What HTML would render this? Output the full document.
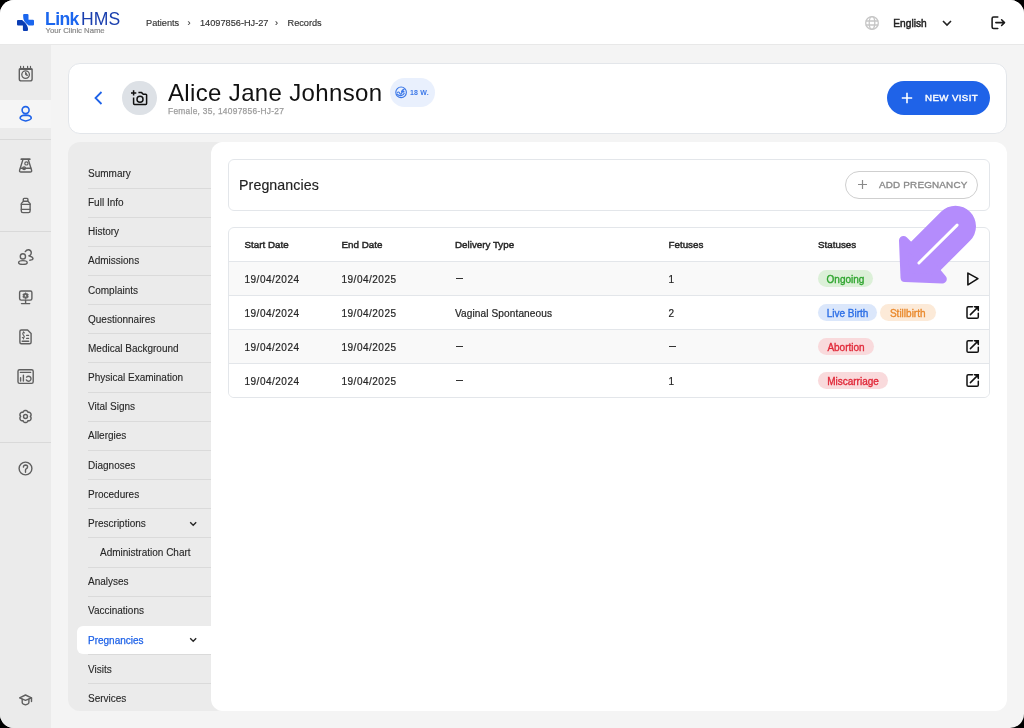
<!DOCTYPE html>
<html><head><meta charset="utf-8"><style>
*{margin:0;padding:0;box-sizing:border-box}
html,body{width:1024px;height:728px;overflow:hidden;background:#000}
body{font-family:"Liberation Sans",sans-serif;color:#222;position:relative}
.screen{position:absolute;left:0;top:0;width:1024px;height:728px;background:#f4f4f4;border-radius:14px;overflow:hidden;will-change:transform}
.abs{position:absolute}
.t{position:absolute;white-space:nowrap;line-height:1}
svg{position:absolute;overflow:visible}
.card{position:absolute;background:#fff;border:1px solid #e3e6ea;border-radius:12px}
.ni{position:absolute;font-size:10px;line-height:1;color:#262626;white-space:nowrap;-webkit-text-stroke:0.1px #262626}
.dv{position:absolute;height:1px;background:#dadada}
.cell{position:absolute;font-size:10px;letter-spacing:0.5px;-webkit-text-stroke:0.2px #262626;line-height:1;color:#262626;white-space:nowrap}
.hcell{position:absolute;font-size:9.8px;-webkit-text-stroke:0.45px currentColor;line-height:1;color:#262626;white-space:nowrap}
.chip{position:absolute;height:17px;border-radius:9px;font-size:10px;line-height:19px;white-space:nowrap;text-align:center;-webkit-text-stroke:0.35px currentColor}
.ic{fill:none;stroke:#5f5f5f;stroke-width:1.4;stroke-linecap:round;stroke-linejoin:round}
</style></head><body><div class="screen">
<div class="abs" style="left:0;top:0;width:1024px;height:45px;background:#fff;border-bottom:1px solid #e8e8e8"></div>
<svg style="left:17px;top:14px" width="17" height="17" viewBox="0 0 17 17">
<path d="M6.1 1.1 Q6.1 0 7.2 0 L10.4 0 Q11.5 0 11.5 1.1 L11.5 5.7 L15.9 5.7 Q17 5.7 17 6.8 L17 10.4 Q17 11.5 15.9 11.5 L11.7 11.5 C9.5 9.5 6.6 7.5 6.3 4 Z" fill="#1b66ee"/>
<path d="M0 6.8 Q0 5.9 1.1 5.9 L5.2 5.9 C7.6 8.2 10.9 11 11 14.6 L11 15.9 Q11 17 9.9 17 L7 17 Q5.9 17 5.9 15.9 L5.9 11.5 L1.1 11.5 Q0 11.5 0 10.4 Z" fill="#0a3db4"/>
</svg>
<div class="t" style="left:45px;top:11px;font-size:17.6px;font-weight:bold;color:#1b66ee;letter-spacing:-0.6px">Link</div>
<div class="t" style="left:81px;top:11px;font-size:17.6px;color:#1a3fae;letter-spacing:0.1px">HMS</div>
<div class="t" style="left:45.5px;top:26.5px;font-size:7.8px;color:#8a8a8a;letter-spacing:-0.05px;-webkit-text-stroke:0.2px #8a8a8a">Your Clinic Name</div>
<div class="t" style="left:146px;top:18.6px;font-size:9.2px;color:#333;-webkit-text-stroke:0.15px #333">Patients</div>
<div class="t" style="left:187.5px;top:18.6px;font-size:9.2px;color:#333;-webkit-text-stroke:0.15px #333">&rsaquo;</div>
<div class="t" style="left:200px;top:18.6px;font-size:9.2px;color:#333;-webkit-text-stroke:0.15px #333">14097856-HJ-27</div>
<div class="t" style="left:275px;top:18.6px;font-size:9.2px;color:#333;-webkit-text-stroke:0.15px #333">&rsaquo;</div>
<div class="t" style="left:287.5px;top:18.6px;font-size:9.2px;color:#333;-webkit-text-stroke:0.15px #333">Records</div>
<svg style="left:865px;top:16px" width="14" height="14" viewBox="0 0 14 14" fill="none" stroke="#c6c6c6" stroke-width="1.3">
<circle cx="7" cy="7" r="6.3"/><ellipse cx="7" cy="7" rx="2.8" ry="6.3"/><path d="M0.7 5H13.3M0.7 9H13.3"/></svg>
<div class="t" style="left:893.3px;top:18.6px;font-size:10.2px;color:#222;-webkit-text-stroke:0.45px #222">English</div>
<svg style="left:942px;top:20px" width="10" height="6" viewBox="0 0 10 6" fill="none" stroke="#222" stroke-width="1.6"><path d="M1 1L5 5L9 1"/></svg>
<svg style="left:991px;top:16px" width="15" height="13" viewBox="0 0 15 13" fill="none" stroke="#1a1a1a" stroke-width="1.55" stroke-linecap="round" stroke-linejoin="round">
<path d="M6.8 1H2.6Q1.1 1 1.1 2.5V10.9Q1.1 12.4 2.6 12.4H6.8M4.8 6.6H13.5M10.6 3.7L13.5 6.6L10.6 9.5"/></svg>
<div class="abs" style="left:0;top:45px;width:51px;height:683px;background:#ebebeb"></div>
<div class="abs" style="left:0;top:100px;width:51px;height:28px;background:#f5f5f5"></div>
<div class="abs" style="left:0;top:139px;width:51px;height:1px;background:#d9d9d9"></div>
<div class="abs" style="left:0;top:231px;width:51px;height:1px;background:#d9d9d9"></div>
<div class="abs" style="left:0;top:442px;width:51px;height:1px;background:#d9d9d9"></div>
<svg style="left:14px;top:60px" width="24" height="24" viewBox="0 0 24 24" class="ic" ><rect x="5.3" y="8.6" width="12.8" height="12.3" rx="2"/><path d="M5.6 9.2H17.8" stroke-width="1.8"/><path d="M6.6 6.4V8.6M9.5 6.4V8.6M13.6 6.4V8.6M16.5 6.4V8.6" stroke-width="1.2"/><circle cx="11.6" cy="14.6" r="3.8" stroke-width="1.3"/><path d="M11.6 12.6V14.8L13.2 15.4Z" fill="#5f5f5f" stroke-width="1"/></svg>
<svg style="left:14px;top:102px" width="24" height="24" viewBox="0 0 24 24" class="ic"><g style="stroke:#1f63e8;stroke-width:1.6"><circle cx="11.6" cy="8.1" r="3.5"/><path d="M6.1 16.1Q6.5 13.2 11.7 13.1Q16.9 13.2 17.3 16.1Q16.8 17.9 11.7 19Q6.6 17.9 6.1 16.1Z"/></g></svg>
<svg style="left:14px;top:154px" width="24" height="24" viewBox="0 0 24 24" class="ic" ><path d="M7.3 5.2H15.8" stroke-width="1.7"/><path d="M9 5.4L5.6 16.3Q5.2 18 7 18H16.2Q18 18 17.6 16.3L14.2 5.4"/><path d="M6.6 14.3H16.8"/><circle cx="12.4" cy="9.4" r="1.6" stroke-width="1.2"/><circle cx="10.1" cy="14.2" r="1.4" stroke-width="1.2"/></svg>
<svg style="left:14px;top:194px" width="24" height="24" viewBox="0 0 24 24" class="ic" ><rect x="9.3" y="4.4" width="4.6" height="2.8" rx="0.8"/><path d="M9.4 7.3L7.3 9.6V17Q7.3 18.6 8.9 18.6H14.5Q16.1 18.6 16.1 17V9.6L14 7.3"/><path d="M7.4 10.4H16M7.4 15.4H16"/></svg>
<svg style="left:14px;top:245px" width="24" height="24" viewBox="0 0 24 24" class="ic" ><circle cx="8.9" cy="11.4" r="2.6"/><ellipse cx="8.9" cy="17.5" rx="4.3" ry="1.9"/><path d="M11.3 6.6Q12.6 4.6 14.4 4.7Q17.4 5 17.3 8Q17.1 10.2 14.8 10.9Q18.9 11.8 19 13.5Q18.9 15 15.8 15.2"/></svg>
<svg style="left:14px;top:285px" width="24" height="24" viewBox="0 0 24 24" class="ic" ><rect x="5.6" y="6" width="12.3" height="9.1" rx="1.5"/><path d="M11.6 15.3V18.5M7.5 18.6H15.7"/><path d="M13.70 10.80 L14.00 10.59 L14.18 10.35 L14.29 10.08 L14.33 9.81 L14.30 9.54 L14.20 9.30 L14.04 9.09 L13.82 8.93 L13.57 8.83 L13.28 8.80 L12.98 8.83 L12.65 8.98 L12.62 8.62 L12.50 8.34 L12.32 8.11 L12.10 7.94 L11.86 7.84 L11.60 7.80 L11.34 7.84 L11.10 7.94 L10.88 8.11 L10.70 8.34 L10.58 8.62 L10.55 8.98 L10.22 8.83 L9.92 8.80 L9.63 8.83 L9.38 8.93 L9.16 9.09 L9.00 9.30 L8.90 9.54 L8.87 9.81 L8.91 10.08 L9.02 10.35 L9.20 10.59 L9.50 10.80 L9.20 11.01 L9.02 11.25 L8.91 11.52 L8.87 11.79 L8.90 12.06 L9.00 12.30 L9.16 12.51 L9.38 12.67 L9.63 12.77 L9.92 12.80 L10.22 12.77 L10.55 12.62 L10.58 12.98 L10.70 13.26 L10.88 13.49 L11.10 13.66 L11.34 13.76 L11.60 13.80 L11.86 13.76 L12.10 13.66 L12.32 13.49 L12.50 13.26 L12.62 12.98 L12.65 12.62 L12.98 12.77 L13.28 12.80 L13.57 12.77 L13.82 12.67 L14.04 12.51 L14.20 12.30 L14.30 12.06 L14.33 11.79 L14.29 11.52 L14.18 11.25 L14.00 11.01 L13.70 10.80Z M12.75 10.8A1.15 1.15 0 1 0 10.45 10.8A1.15 1.15 0 1 0 12.75 10.8Z" fill="#5f5f5f" fill-rule="evenodd" stroke-width="0.6"/></svg>
<svg style="left:14px;top:325px" width="24" height="24" viewBox="0 0 24 24" class="ic" ><path d="M7.3 5H13.6L17.1 8.5V17.3Q17.1 18.8 15.6 18.8H7.3Q5.9 18.8 5.9 17.3V6.4Q5.9 5 7.3 5Z"/><path d="M10.4 7.8Q9.6 7.2 9 7.8Q8.3 8.8 9.5 10.2Q10.8 11.6 9.9 12.6Q9.2 13.2 8.4 12.6M9.5 6.8V7.4M9.5 13.2V13.8" stroke-width="1.2"/><path d="M12.6 10.4H14.6M12.6 13.4H14.6" stroke-width="1.2"/><path d="M8.3 16.2H14.6" stroke-width="1.6"/></svg>
<svg style="left:14px;top:365px" width="24" height="24" viewBox="0 0 24 24" class="ic" ><rect x="4" y="4.7" width="15.2" height="13.7" rx="1.6"/><path d="M6.4 7.4H16.6"/><path d="M6.6 12.8V16M9.4 10.2V16"/><path d="M12.6 12.1A2.5 2.5 0 1 1 12.3 14.9"/></svg>
<svg style="left:14px;top:404px" width="24" height="24" viewBox="0 0 24 24" class="ic" ><path d="M16.35 12.50 L16.74 12.04 L16.96 11.54 L17.06 11.01 L17.06 10.48 L16.95 9.96 L16.74 9.48 L16.43 9.05 L16.03 8.69 L15.57 8.43 L15.06 8.26 L14.52 8.19 L13.93 8.30 L13.72 7.74 L13.39 7.29 L12.99 6.94 L12.53 6.67 L12.02 6.51 L11.50 6.45 L10.98 6.51 L10.47 6.67 L10.01 6.94 L9.61 7.29 L9.28 7.74 L9.07 8.30 L8.48 8.19 L7.94 8.26 L7.43 8.43 L6.97 8.69 L6.57 9.05 L6.26 9.48 L6.05 9.96 L5.94 10.48 L5.94 11.01 L6.04 11.54 L6.26 12.04 L6.65 12.50 L6.26 12.96 L6.04 13.46 L5.94 13.99 L5.94 14.52 L6.05 15.04 L6.26 15.53 L6.57 15.95 L6.97 16.31 L7.43 16.57 L7.94 16.74 L8.48 16.81 L9.07 16.70 L9.28 17.26 L9.61 17.71 L10.01 18.06 L10.47 18.33 L10.98 18.49 L11.50 18.55 L12.02 18.49 L12.53 18.33 L12.99 18.06 L13.39 17.71 L13.72 17.26 L13.93 16.70 L14.52 16.81 L15.06 16.74 L15.57 16.57 L16.03 16.31 L16.43 15.95 L16.74 15.53 L16.95 15.04 L17.06 14.52 L17.06 13.99 L16.96 13.46 L16.74 12.96 L16.35 12.50Z" stroke-width="1.45"/><circle cx="11.5" cy="12.5" r="1.95" stroke-width="1.4"/></svg>
<svg style="left:14px;top:456px" width="24" height="24" viewBox="0 0 24 24" class="ic" ><circle cx="11.5" cy="12.5" r="6.4"/><path d="M9.4 11.1Q9.6 9 11.5 9Q13.6 9.1 13.6 10.9Q13.5 12.2 12.2 12.8Q11.5 13.3 11.5 14.3V16.2"/></svg>
<svg style="left:14px;top:688px" width="24" height="24" viewBox="0 0 24 24" class="ic" ><path d="M5.6 9.9L11.5 7.0L17.5 9.9L11.5 12.4Z"/><path d="M17.5 9.9V13.6"/><path d="M8.2 11.2V14.6Q8.2 15.6 9.4 16.2L11.5 16.9L13.6 16.2Q14.9 15.6 14.9 14.6V11.2"/></svg>
<div class="card" style="left:68px;top:62.5px;width:939px;height:71px"></div>
<svg style="left:93.6px;top:91.3px" width="9" height="14" viewBox="0 0 9 14" fill="none" stroke="#1f63e8" stroke-width="1.8"><path d="M7.5 1L1.5 7L7.5 13"/></svg>
<div class="abs" style="left:122.3px;top:81px;width:34.4px;height:34.4px;border-radius:50%;background:#dde1e6"></div>
<svg style="left:127px;top:86px" width="24" height="24" viewBox="0 0 24 24" fill="none" stroke="#111" stroke-width="1.5" stroke-linecap="butt" stroke-linejoin="round"><path d="M4 6.9H9.3M6.6 4.3V9.6"/><path d="M6.6 11.5V17.6Q6.6 18.5 7.5 18.5H18.7Q19.6 18.5 19.6 17.6V9.1Q19.6 8.2 18.7 8.2H16.2L14.6 6.6H11.4"/><circle cx="13" cy="13.3" r="3"/></svg>
<div class="t" style="left:168px;top:81px;font-size:24px;color:#111;letter-spacing:0.35px">Alice Jane Johnson</div>
<div class="t" style="left:168px;top:107.4px;font-size:8.4px;color:#9c9c9c;letter-spacing:0.28px;-webkit-text-stroke:0.25px #9c9c9c">Female, 35, 14097856-HJ-27</div>
<div class="abs" style="left:390px;top:78px;width:45px;height:29px;border-radius:15px;background:#e9f0fd"></div>
<svg style="left:393px;top:84px" width="16" height="16" viewBox="0 0 16 16" fill="none" stroke="#3c78e8" stroke-width="1.15" stroke-linecap="round" stroke-linejoin="round"><circle cx="8.1" cy="8.3" r="5.3"/><path d="M4.4 8.4Q5.8 7.3 6.6 9.1Q7.4 10.9 8.5 9.7Q9.2 8.8 8.6 7.6Q9.4 5.8 11 5.4"/><ellipse cx="9.9" cy="7.5" rx="1.1" ry="0.55"/><path d="M4.4 10.2Q6 12.3 8.6 11.4Q10.6 10.8 11.2 9.2"/></svg>
<div class="t" style="left:410px;top:88.8px;font-size:7px;letter-spacing:0.2px;font-weight:bold;color:#3c78e8">18 W.</div>
<div class="abs" style="left:887px;top:81px;width:103px;height:34px;border-radius:17px;background:#1f63e8"></div>
<svg style="left:901px;top:92px" width="12" height="12" viewBox="0 0 12 12" stroke="#fff" stroke-width="1.6"><path d="M6 0.8V11.2M0.8 6H11.2"/></svg>
<div class="t" style="left:925px;top:93.4px;font-size:9.7px;color:#fff;letter-spacing:0.4px;-webkit-text-stroke:0.4px #fff">NEW VISIT</div>
<div class="abs" style="left:68px;top:142px;width:160px;height:569px;background:#ebebeb;border-radius:12px"></div>
<div class="abs" style="left:77px;top:626px;width:140px;height:28px;background:#fff;border-radius:6px"></div>
<div class="abs" style="left:211px;top:142px;width:796px;height:569px;background:#fff;border-radius:12px"></div>
<div class="ni" style="left:88px;top:169.00px;color:#262626;">Summary</div>
<div class="dv" style="left:88px;top:187.55px;width:123px"></div>
<div class="ni" style="left:88px;top:198.15px;color:#262626;">Full Info</div>
<div class="dv" style="left:88px;top:216.70px;width:123px"></div>
<div class="ni" style="left:88px;top:227.30px;color:#262626;">History</div>
<div class="dv" style="left:88px;top:245.85px;width:123px"></div>
<div class="ni" style="left:88px;top:256.45px;color:#262626;">Admissions</div>
<div class="dv" style="left:88px;top:275.00px;width:123px"></div>
<div class="ni" style="left:88px;top:285.60px;color:#262626;">Complaints</div>
<div class="dv" style="left:88px;top:304.15px;width:123px"></div>
<div class="ni" style="left:88px;top:314.75px;color:#262626;">Questionnaires</div>
<div class="dv" style="left:88px;top:333.30px;width:123px"></div>
<div class="ni" style="left:88px;top:343.90px;color:#262626;">Medical Background</div>
<div class="dv" style="left:88px;top:362.45px;width:123px"></div>
<div class="ni" style="left:88px;top:373.05px;color:#262626;">Physical Examination</div>
<div class="dv" style="left:88px;top:391.60px;width:123px"></div>
<div class="ni" style="left:88px;top:402.20px;color:#262626;">Vital Signs</div>
<div class="dv" style="left:88px;top:420.75px;width:123px"></div>
<div class="ni" style="left:88px;top:431.35px;color:#262626;">Allergies</div>
<div class="dv" style="left:88px;top:449.90px;width:123px"></div>
<div class="ni" style="left:88px;top:460.50px;color:#262626;">Diagnoses</div>
<div class="dv" style="left:88px;top:479.05px;width:123px"></div>
<div class="ni" style="left:88px;top:489.65px;color:#262626;">Procedures</div>
<div class="dv" style="left:88px;top:508.20px;width:123px"></div>
<div class="ni" style="left:88px;top:518.80px;color:#262626;">Prescriptions</div>
<svg style="left:189px;top:520.50px" width="8" height="6" viewBox="0 0 8 6" fill="none" stroke="#262626" stroke-width="1.4"><path d="M1.2 1.3L4.2 4.2L7.2 1.3"/></svg>
<div class="dv" style="left:88px;top:537.35px;width:123px"></div>
<div class="ni" style="left:100px;top:547.95px;color:#262626;">Administration Chart</div>
<div class="dv" style="left:88px;top:566.50px;width:123px"></div>
<div class="ni" style="left:88px;top:577.10px;color:#262626;">Analyses</div>
<div class="dv" style="left:88px;top:595.65px;width:123px"></div>
<div class="ni" style="left:88px;top:606.25px;color:#262626;">Vaccinations</div>
<div class="ni" style="left:88px;top:636.00px;color:#1f63e8;-webkit-text-stroke:0.25px #1f63e8;">Pregnancies</div>
<svg style="left:189px;top:637.10px" width="8" height="6" viewBox="0 0 8 6" fill="none" stroke="#262626" stroke-width="1.4"><path d="M1.2 1.3L4.2 4.2L7.2 1.3"/></svg>
<div class="dv" style="left:88px;top:653.95px;width:123px"></div>
<div class="ni" style="left:88px;top:664.55px;color:#262626;">Visits</div>
<div class="dv" style="left:88px;top:683.10px;width:123px"></div>
<div class="ni" style="left:88px;top:693.70px;color:#262626;">Services</div>
<div class="card" style="left:227.6px;top:159px;width:762.4px;height:52px;border-radius:6px"></div>
<div class="t" style="left:239px;top:178px;font-size:14.2px;color:#222;letter-spacing:0.1px;-webkit-text-stroke:0.15px #222">Pregnancies</div>
<div class="abs" style="left:844.7px;top:171px;width:133.5px;height:27.5px;border-radius:14px;border:1px solid #cfcfcf;background:#fff"></div>
<svg style="left:857px;top:179px" width="11" height="11" viewBox="0 0 11 11" stroke="#8a8a8a" stroke-width="1.2"><path d="M5.5 1V10M1 5.5H10"/></svg>
<div class="t" style="left:879px;top:180px;font-size:9.9px;color:#8a8a8a;letter-spacing:0.18px;-webkit-text-stroke:0.35px #8a8a8a">ADD PREGNANCY</div>
<div class="card" style="left:227.6px;top:227px;width:762.4px;height:171px;border-radius:6px;overflow:hidden"></div>
<div class="hcell" style="left:244.5px;top:240px">Start Date</div>
<div class="hcell" style="left:341.5px;top:240px">End Date</div>
<div class="hcell" style="left:455px;top:240px">Delivery Type</div>
<div class="hcell" style="left:668.5px;top:240px">Fetuses</div>
<div class="hcell" style="left:818px;top:240px">Statuses</div>
<div class="abs" style="left:229px;top:261px;width:760px;height:34px;background:#f9f9f9;border-top:1px solid #e3e6ea;"></div>
<div class="cell" style="left:244.5px;top:275px;">19/04/2024</div>
<div class="cell" style="left:341.5px;top:275px;">19/04/2025</div>
<div class="abs" style="left:455.7px;top:278px;width:7px;height:1.3px;background:#333"></div>
<div class="cell" style="left:668.5px;top:275px;">1</div>
<div class="chip" style="left:818px;top:270px;width:55px;background:#dcf0d8;color:#2fa52f">Ongoing</div>
<svg style="left:966px;top:272px" width="13" height="14" viewBox="0 0 13 14" fill="none" stroke="#111" stroke-width="1.6" stroke-linejoin="round"><path d="M1.9 1.1L11.9 6.6L1.9 12.9Z"/></svg>
<div class="abs" style="left:229px;top:295px;width:760px;height:34px;background:#fff;border-top:1px solid #e3e6ea;"></div>
<div class="cell" style="left:244.5px;top:309px;">19/04/2024</div>
<div class="cell" style="left:341.5px;top:309px;">19/04/2025</div>
<div class="cell" style="left:455px;top:309px;font-size:10.1px;letter-spacing:0.1px;">Vaginal Spontaneous</div>
<div class="cell" style="left:668.5px;top:309px;">2</div>
<div class="chip" style="left:818px;top:304px;width:59px;background:#dbe7fb;color:#2d6fe6">Live Birth</div>
<div class="chip" style="left:880px;top:304px;width:55.5px;background:#fcead8;color:#ea8a2e">Stillbirth</div>
<svg style="left:966px;top:306px" width="13" height="13" viewBox="0 0 13 13" fill="none" stroke="#111" stroke-width="1.5" stroke-linecap="round"><path d="M6.4 0.8H2.3Q1 0.8 1 2.1V10.9Q1 12.2 2.3 12.2H11Q12.3 12.2 12.3 10.9V7.3M8.4 0.8H12.3V4.6M12.2 0.9L4.4 8.6"/><path d="M9.6 0.8H12.3V3.5Z" fill="#111" stroke-width="0.8"/></svg>
<div class="abs" style="left:229px;top:329px;width:760px;height:34px;background:#f9f9f9;border-top:1px solid #e3e6ea;"></div>
<div class="cell" style="left:244.5px;top:343px;">19/04/2024</div>
<div class="cell" style="left:341.5px;top:343px;">19/04/2025</div>
<div class="abs" style="left:455.7px;top:346px;width:7px;height:1.3px;background:#333"></div>
<div class="abs" style="left:669.2px;top:346px;width:7px;height:1.3px;background:#333"></div>
<div class="chip" style="left:818px;top:338px;width:56px;background:#f9dadc;color:#e12a3a">Abortion</div>
<svg style="left:966px;top:340px" width="13" height="13" viewBox="0 0 13 13" fill="none" stroke="#111" stroke-width="1.5" stroke-linecap="round"><path d="M6.4 0.8H2.3Q1 0.8 1 2.1V10.9Q1 12.2 2.3 12.2H11Q12.3 12.2 12.3 10.9V7.3M8.4 0.8H12.3V4.6M12.2 0.9L4.4 8.6"/><path d="M9.6 0.8H12.3V3.5Z" fill="#111" stroke-width="0.8"/></svg>
<div class="abs" style="left:229px;top:363px;width:760px;height:34px;background:#fff;border-top:1px solid #e3e6ea;border-radius:0 0 5px 5px;"></div>
<div class="cell" style="left:244.5px;top:377px;">19/04/2024</div>
<div class="cell" style="left:341.5px;top:377px;">19/04/2025</div>
<div class="abs" style="left:455.7px;top:380px;width:7px;height:1.3px;background:#333"></div>
<div class="cell" style="left:668.5px;top:377px;">1</div>
<div class="chip" style="left:818px;top:372px;width:70px;background:#f9dadc;color:#e12a3a">Miscarriage</div>
<svg style="left:966px;top:374px" width="13" height="13" viewBox="0 0 13 13" fill="none" stroke="#111" stroke-width="1.5" stroke-linecap="round"><path d="M6.4 0.8H2.3Q1 0.8 1 2.1V10.9Q1 12.2 2.3 12.2H11Q12.3 12.2 12.3 10.9V7.3M8.4 0.8H12.3V4.6M12.2 0.9L4.4 8.6"/><path d="M9.6 0.8H12.3V3.5Z" fill="#111" stroke-width="0.8"/></svg>
<svg style="left:0;top:0" width="1024" height="728" viewBox="0 0 1024 728">
<g fill="#b48cfc" stroke="#b48cfc" stroke-linejoin="round" stroke-linecap="round">
<line x1="925" y1="256.8" x2="955.5" y2="226.3" stroke-width="41"/>
<path d="M903.5 240.5 L905 277.5 L942.3 279 L934 269 L914 251 Z" stroke-width="9"/>
</g>
<line x1="918.9" y1="263" x2="957.1" y2="225.1" stroke="#fff" stroke-width="2.9" stroke-linecap="round"/>
</svg>
</div></body></html>
